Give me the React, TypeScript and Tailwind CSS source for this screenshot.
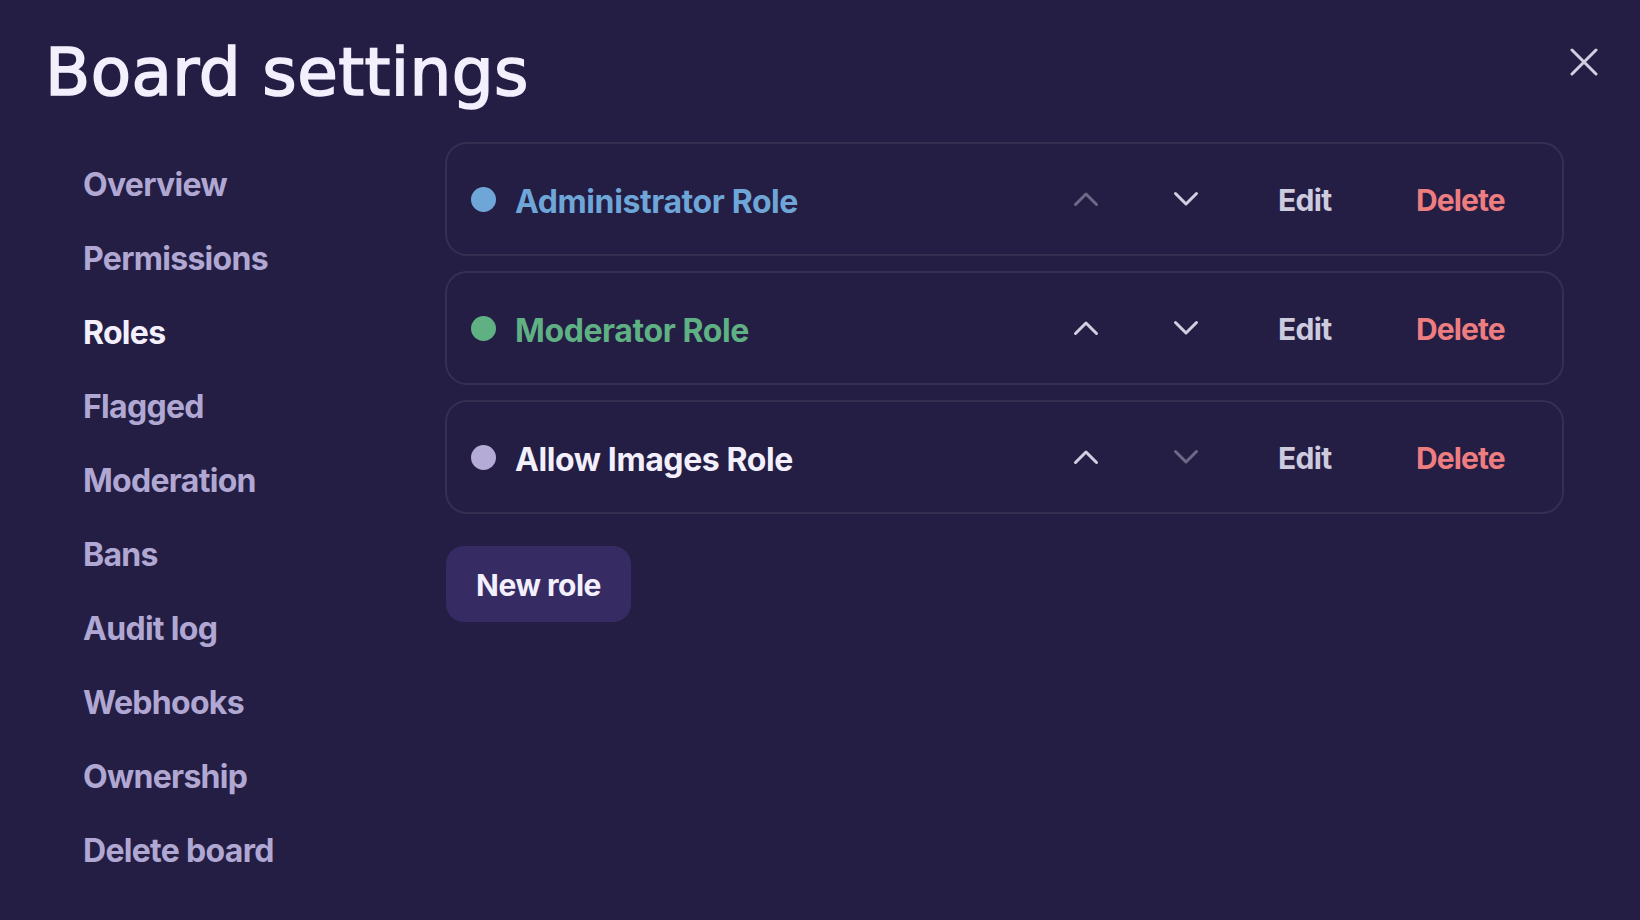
const navItems = ['Overview', 'Permissions', 'Roles', 'Flagged', 'Moderation', 'Bans', 'Audit log', 'Webhooks', 'Ownership', 'Delete board']

const roles = [
  { name: 'Administrator Role', dot: 'bg-[#6fa6d8]', text: 'text-[#6fa6d8]', upDisabled: true, downDisabled: false },
  { name: 'Moderator Role', dot: 'bg-[#5fb184]', text: 'text-[#5fb184]', upDisabled: false, downDisabled: false },
  { name: 'Allow Images Role', dot: 'bg-[#b4abd6]', text: 'text-[#f3effc]', upDisabled: false, downDisabled: true },
]

function Chevron({ up, disabled }: { up: boolean; disabled: boolean }) {
  return (
    <button className="flex h-[30px] w-[100px] items-center justify-center">
      <svg
        width="26"
        height="16"
        viewBox="0 0 26 16"
        fill="none"
        stroke="currentColor"
        strokeWidth="3"
        strokeLinecap="round"
        strokeLinejoin="round"
        className={disabled ? 'text-[#6f6887]' : 'text-[#d3cfe2]'}
      >
        <path d={up ? 'M2.5 13.5 13 3l10.5 10.5' : 'M2.5 2.5 13 13 23.5 2.5'} />
      </svg>
    </button>
  )
}

export default function App() {
  return (
    <div className="h-[920px] w-[1640px] overflow-hidden bg-[#241e45] font-['Inter',sans-serif]">
      <div className="flex h-[142px] items-start justify-between pl-[45px] pr-[42px] pt-[37px]">
        <h1 className="font-['DejaVu_Sans',sans-serif] text-[66px] leading-[72px] font-normal tracking-[0.4px] text-[#f3effc] [-webkit-text-stroke:1.6px_#f3effc]">Board settings</h1>
        <button className="mt-[11px] text-[#d3cfe2]">
          <svg width="28" height="28" viewBox="0 0 28 28" fill="none" stroke="currentColor" strokeWidth="3" strokeLinecap="round">
            <path d="M2 2l24 24M26 2 2 26" />
          </svg>
        </button>
      </div>

      <div className="flex">
        <nav className="flex w-[445px] flex-col pl-[83px] pt-[6px]">
          {navItems.map((item) => (
            <a key={item} className={`h-[74px] text-[32px] leading-[74px] font-[650] tracking-[-0.7px] ${item === 'Roles' ? 'text-[#f3effc]' : 'text-[#b0a8d2]'}`}>
              {item}
            </a>
          ))}
        </nav>

        <div className="w-[1119px]">
          <div className="flex flex-col gap-[15px]">
            {roles.map((role) => (
              <div key={role.name} className="flex h-[114px] items-center rounded-[22px] border-2 border-[#352f52] pl-[24px]">
                <span className={`h-[25px] w-[25px] rounded-full ${role.dot}`} />
                <span className={`ml-[19px] flex-1 pt-[5px] text-[32px] font-[650] tracking-[-0.4px] ${role.text}`}>{role.name}</span>
                <Chevron up disabled={role.upDisabled} />
                <Chevron up={false} disabled={role.downDisabled} />
                <button className="ml-[42px] w-[138px] pt-[3px] text-left text-[30px] font-[650] tracking-[-0.7px] text-[#cfcbdf]">Edit</button>
                <button className="mr-[57px] w-[89px] pt-[3px] text-left text-[30px] font-[650] tracking-[-0.9px] text-[#ee7d80]">Delete</button>
              </div>
            ))}
          </div>
          <button className="mt-[32px] ml-[1px] h-[76px] w-[185px] rounded-[18px] bg-[#362c63] pt-[2px] text-[30px] font-[650] tracking-[-0.5px] text-[#f3effc]">New role</button>
        </div>
      </div>
    </div>
  )
}
